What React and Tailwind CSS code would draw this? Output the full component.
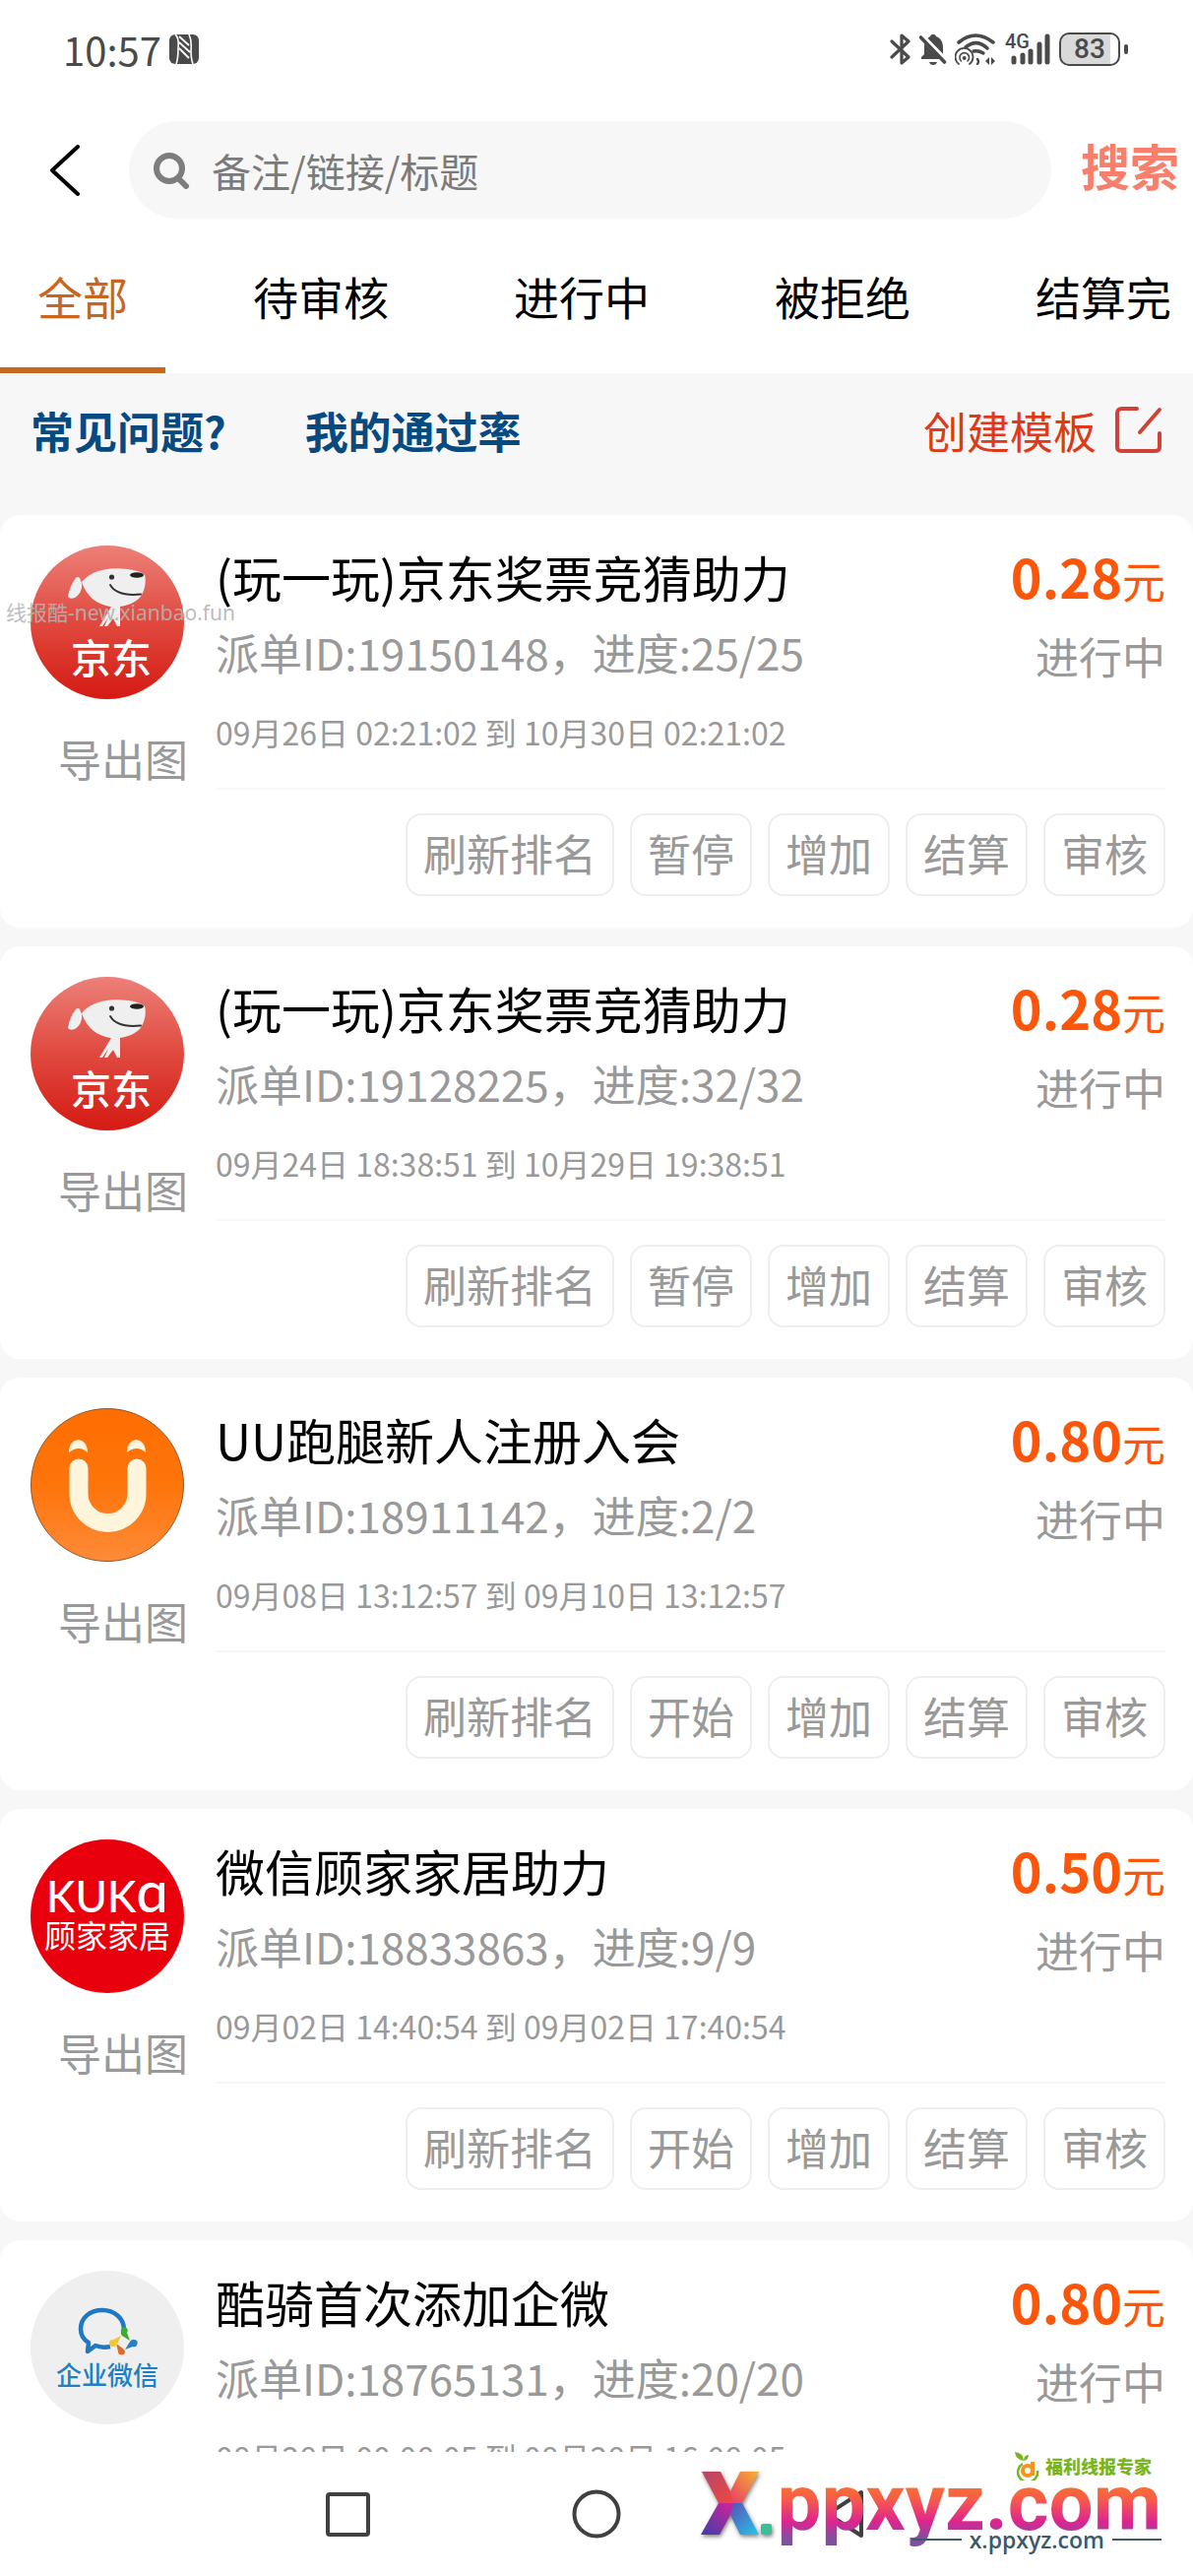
import React, { useState } from 'react';

const tabs = ['全部', '待审核', '进行中', '被拒绝', '结算完'];

const orders = [
  {
    id: '19150148',
    logo: 'jd',
    title: '(玩一玩)京东奖票竞猜助力',
    progress: '25/25',
    period: '09月26日 02:21:02 到 10月30日 02:21:02',
    price: '0.28',
    toggle: '暂停',
  },
  {
    id: '19128225',
    logo: 'jd',
    title: '(玩一玩)京东奖票竞猜助力',
    progress: '32/32',
    period: '09月24日 18:38:51 到 10月29日 19:38:51',
    price: '0.28',
    toggle: '暂停',
  },
  {
    id: '18911142',
    logo: 'uu',
    title: 'UU跑腿新人注册入会',
    progress: '2/2',
    period: '09月08日 13:12:57 到 09月10日 13:12:57',
    price: '0.80',
    toggle: '开始',
  },
  {
    id: '18833863',
    logo: 'kuka',
    title: '微信顾家家居助力',
    progress: '9/9',
    period: '09月02日 14:40:54 到 09月02日 17:40:54',
    price: '0.50',
    toggle: '开始',
  },
  {
    id: '18765131',
    logo: 'wecom',
    title: '酷骑首次添加企微',
    progress: '20/20',
    period: '08月28日 00:08:05 到 08月28日 16:08:05',
    price: '0.80',
    toggle: '开始',
  },
];

const JdLogo = () => (
  <svg viewBox="0 0 156 156" className="w-full h-full">
    <defs>
      <linearGradient id="jd" x1="0" y1="0" x2="0" y2="1">
        <stop offset="0" stopColor="#ec8078" />
        <stop offset="0.5" stopColor="#e0493f" />
        <stop offset="1" stopColor="#d41a12" />
      </linearGradient>
    </defs>
    <circle cx="78" cy="78" r="78" fill="url(#jd)" />
    <path d="M52 37C60 27 76 22 92 23.500C103 24 112 26 116 30C118 36 116 48 110 54C103 60 93 63 81 62C68 60 57 52 52 37Z" fill="#efefef" />
    <path d="M52 38L50 33Q48 31 46 33C42 38 39 45 38 52Q40 55 45 53C50 50 53 44 52 38Z" fill="#efefef" />
    <path d="M82 62L91 62L91 82L88 82L84 74L78 82L75 82L79 73L73 82L70 82Z" fill="#efefef" />
    <circle cx="82.500" cy="32" r="2.600" fill="#333" />
    <ellipse cx="108" cy="30" rx="7" ry="2.800" fill="#222" />
    <path d="M81 40Q88 52 112 49.500" fill="none" stroke="#333" strokeWidth="2" strokeLinecap="round" />
    <text x="82" y="130" textAnchor="middle" fontSize="41" fontWeight="500" fill="#fff">京东</text>
  </svg>
);

const UuLogo = () => (
  <svg viewBox="0 0 156 156" className="w-full h-full">
    <defs>
      <linearGradient id="uu" x1="0" y1="0" x2="0" y2="1">
        <stop offset="0" stopColor="#ff6d00" />
        <stop offset="0.500" stopColor="#fd750b" />
        <stop offset="1" stopColor="#ff8a38" />
      </linearGradient>
    </defs>
    <circle cx="78" cy="78" r="77.500" fill="url(#uu)" stroke="#8a5a32" strokeWidth="1" />
    <path d="M49 61V87A29.500 29.500 0 0 0 108 87V61" fill="none" stroke="#fff4dc" strokeWidth="19" strokeLinecap="round" />
    <path d="M39 45C39 28 58 28 58 45Q49 37 39 45Z" fill="#fff4dc" />
    <path d="M98 45C98 28 117 28 117 45Q108 37 98 45Z" fill="#fff4dc" />
  </svg>
);

const KukaLogo = () => (
  <svg viewBox="0 0 156 156" className="w-full h-full">
    <circle cx="78" cy="78" r="78" fill="#e8000d" />
    <text x="78" y="74" textAnchor="middle" fontSize="44" fontWeight="500" fill="#fff" fontFamily="Lato, sans-serif">
      KUK<tspan fontSize="58">ɑ</tspan>
    </text>
    <text x="78" y="110" textAnchor="middle" fontSize="32" fill="#fff">顾家家居</text>
  </svg>
);

const WecomLogo = () => (
  <svg viewBox="0 0 156 156" className="w-full h-full">
    <circle cx="78" cy="78" r="78" fill="#efefef" />
    <path d="M95 60C95 48 85 40 73 40C60 40 51 48 51 59C51 65 54 70 59 73L58 82L66 76C71 78 76 78 81 77" fill="none" stroke="#1f78c1" strokeWidth="4.500" strokeLinejoin="round" />
    <path d="M92 62A3.500 3.500 0 1 1 98 63L101 71L93 66Q91 64 92 62Z" fill="#3aae2f" />
    <path d="M106 70A3.500 3.500 0 1 1 104 77L96 80L101 72Q103 69 106 70Z" fill="#2a80c4" />
    <path d="M96 82A3.500 3.500 0 1 1 89 82L87 74L94 79Q96 81 96 82Z" fill="#dd6b2f" />
    <path d="M83 77A3.500 3.500 0 1 1 84 70L92 66L88 75Q85 78 83 77Z" fill="#f3c63a" />
    <text x="78" y="116" textAnchor="middle" fontSize="26" fontWeight="500" fill="#1f7fc0">企业微信</text>
  </svg>
);

const logos = { jd: JdLogo, uu: UuLogo, kuka: KukaLogo, wecom: WecomLogo };

const StatusBar = () => (
  <div className="flex items-center justify-between h-[99px] pl-16 pr-[66px] text-[#4a4a4a]">
    <div className="flex items-center gap-2">
      <span className="text-[40px] leading-[48px]">10:57</span>
      {/* NFC */}
      <svg viewBox="0 0 30 30" className="w-[30px] h-[30px]">
        <rect width="30" height="30" rx="6" fill="#4a4a4a" />
        <path d="M6 0Q10 3 9 14Q9 25 7 30M20 0Q23 6 22 16Q22 25 24 30" fill="none" stroke="#fff" strokeWidth="1.600" />
        <path d="M10 8L21 18M10 14L20 24M10 2L20 11" fill="none" stroke="#fff" strokeWidth="1.800" />
      </svg>
    </div>
    <div className="flex items-center gap-2">
      {/* Bluetooth */}
      <svg viewBox="0 0 22 32" className="w-[22px] h-8" fill="none" stroke="#4a4a4a" strokeWidth="3.200" strokeLinecap="round" strokeLinejoin="round">
        <path d="M2 8L19 24L12 30V2L19 8L2 24" />
      </svg>
      {/* Muted bell */}
      <svg viewBox="0 0 28 32" className="w-7 h-8">
        <path d="M2 26V24L5 21V13C5 7 9 4 11 3C12 0 16 0 17 3C22 5 24 9 24 14V21L27 26Z" fill="#4a4a4a" />
        <path d="M10 29H18Q17 32 14 32T10 29Z" fill="#4a4a4a" />
        <path d="M1 1.500L28 29" stroke="#fff" strokeWidth="6" />
        <path d="M1.500 4L25.500 29" stroke="#4a4a4a" strokeWidth="3.600" strokeLinecap="round" />
      </svg>
      {/* Wi-Fi with hotspot */}
      <svg viewBox="0 0 42 32" className="w-[42px] h-8" fill="none" stroke="#4a4a4a" strokeLinecap="round">
        <path d="M4 9Q21 -5 39 9" strokeWidth="3.600" />
        <path d="M11 14Q22 5 33 15" strokeWidth="3.600" />
        <path d="M19 18Q24 17 29 20" strokeWidth="3.400" />
        <path d="M4 31A9 9 0 1 1 15 31" strokeWidth="1.800" />
        <path d="M6.500 28A4.800 4.800 0 1 1 13 28" strokeWidth="1.600" />
        <circle cx="9.700" cy="25" r="2" fill="#4a4a4a" stroke="none" />
        <path d="M23 26Q25 29 23 31" strokeWidth="2.400" />
        <path d="M31 28L35 24V32ZM37 24L41 28L37 32Z" fill="#4a4a4a" stroke="none" />
      </svg>
      {/* Mobile signal */}
      <svg viewBox="0 0 48 32" className="w-12 h-8 overflow-visible">
        <text x="1" y="15" fontSize="20" fontWeight="500" fontFamily="Roboto, sans-serif" fill="#4a4a4a">4G</text>
        <g stroke="#4a4a4a" strokeWidth="5" strokeLinecap="round">
          <path d="M10 25V29M19 22V29M27 18V29M36 11V29M44 3V29" />
        </g>
      </svg>
      {/* Battery */}
      <div className="flex items-center gap-1">
        <div className="flex items-center justify-center w-[62px] h-[34px] rounded-[10px] border-2 border-[#4a4a4a] bg-[linear-gradient(90deg,#d9d9d9_86%,#fff_86%)] font-[Roboto] text-[28px] font-medium leading-[30px]">
          83
        </div>
        <div className="w-1 h-[10px] rounded-full bg-[#4a4a4a]" />
      </div>
    </div>
  </div>
);

const SearchBar = () => (
  <form className="flex mt-6" onSubmit={(e) => e.preventDefault()}>
    <button type="button" aria-label="返回" className="w-[131px] pl-[50px]">
      <svg viewBox="0 0 32 52" className="w-8 h-[52px]" fill="none" stroke="#000" strokeWidth="4" strokeLinecap="round" strokeLinejoin="round">
        <path d="M29 2L3 26L29 50" />
      </svg>
    </button>
    <label className="flex flex-1 min-w-0 items-center gap-[22px] h-[99px] pl-6 rounded-full bg-[#f7f7f7]">
      <svg viewBox="0 0 38 38" className="w-[38px] h-[38px] shrink-0" fill="none" stroke="#7d7d7d" strokeLinecap="round">
        <circle cx="17" cy="17" r="13" strokeWidth="6" />
        <path d="M27 28L34 35" strokeWidth="6" />
      </svg>
      <input
        type="text"
        aria-label="搜索"
        placeholder="备注/链接/标题"
        className="flex-1 min-w-0 bg-transparent outline-none text-[40px] leading-[60px] placeholder:text-[#7b7b7b]"
      />
    </label>
    <button type="submit" className="self-start pl-[30px] pr-[14px] text-[50px] leading-[88px] font-bold text-[#f97f6d]">
      搜索
    </button>
  </form>
);

const OrderCard = ({ order }) => {
  const Logo = logos[order.logo];

  return (
    <article className="flex shrink-0 gap-7 pt-[31px] pb-8 pl-[31px] pr-7 rounded-[20px] bg-white">
      <div className="shrink-0 w-[160px] text-right">
        <div className="w-[156px] h-[156px]">
          <Logo />
        </div>
        <button className="mt-[26px] text-[44px] leading-[68px] text-[#999]">导出图</button>
      </div>

      <div className="flex-1 min-w-0">
        <div className="flex justify-between pb-[34px] border-b-2 border-[#f6f6f6]">
          <div>
            <h2 className="text-[50px] leading-[62px] text-black">{order.title}</h2>
            <p className="mt-[10px] text-[44px] leading-[72px] text-[#999]">
              派单ID:{order.id}，进度:{order.progress}
            </p>
            <p className="mt-[22px] text-[32px] leading-[46px] text-[#999]">{order.period}</p>
          </div>
          <div className="text-right">
            <p className="text-[54px] leading-[62px] font-bold text-[#fb560a]">
              {order.price}
              <span className="text-[44px] leading-none font-normal">元</span>
            </p>
            <p className="mt-[14px] text-[44px] leading-[72px] text-[#999]">进行中</p>
          </div>
        </div>

        {/* Actions */}
        <div className="flex justify-end gap-4 pt-6">
          {['刷新排名', order.toggle, '增加', '结算', '审核'].map((label) => (
            <button key={label} className="h-[84px] pb-1 px-4 border-2 border-[#eee] rounded-[16px] text-[44px] leading-[72px] text-[#999]">
              {label}
            </button>
          ))}
        </div>
      </div>
    </article>
  );
};

// Promo stamp over the bottom right corner
const SiteStamp = () => (
  <div className="absolute right-[32px] bottom-[18px] w-[470px] h-[109px] pointer-events-none">
    <svg viewBox="0 0 80 80" className="absolute left-0 top-[15px] w-20 h-20 overflow-visible drop-shadow-[1px_2px_2px_rgba(0,0,0,0.5)]">
      <defs>
        <linearGradient id="xa" x1="0" y1="0" x2="1" y2="1">
          <stop offset="0" stopColor="#b5476a" />
          <stop offset="1" stopColor="#f0473f" />
        </linearGradient>
        <linearGradient id="xb" x1="1" y1="0" x2="0" y2="1">
          <stop offset="0" stopColor="#f5b52e" />
          <stop offset="1" stopColor="#e8396a" />
        </linearGradient>
        <linearGradient id="xc" x1="1" y1="0" x2="0" y2="1">
          <stop offset="0" stopColor="#d9209b" />
          <stop offset="1" stopColor="#3b3fa8" />
        </linearGradient>
        <linearGradient id="xd" x1="0" y1="0" x2="1" y2="1">
          <stop offset="0" stopColor="#5b4fb0" />
          <stop offset="1" stopColor="#21c8ee" />
        </linearGradient>
      </defs>
      <path d="M3 6H22L32 26L36 38H20Z" fill="url(#xa)" />
      <path d="M42 6H61L44 38H35L32 26Z" fill="url(#xb)" />
      <path d="M20 38H36L32 50L21 70H2Z" fill="url(#xc)" />
      <path d="M35 38H44L61 70H42L32 50Z" fill="url(#xd)" />
      <rect x="63" y="59" width="11" height="11" rx="2" fill="#3bbf97" />
    </svg>
    <span className="absolute right-0 top-0 bg-[linear-gradient(180deg,#f9762b_30%,#f75c48_46%,#dd2491_68%,#7d51a0_84%)] bg-clip-text text-transparent font-[Roboto] text-[80px] leading-[106px] font-bold">
      ppxyz.com
    </span>
    <div className="absolute right-0 top-[75px] flex items-center gap-2 text-[#3f5a66]">
      <span className="w-[50px] h-[2px] bg-[#3f5a66]" />
      <span className="font-['Open_Sans'] text-[23px] leading-[30px] font-semibold">x.ppxyz.com</span>
      <span className="w-[50px] h-[2px] bg-[#3f5a66]" />
    </div>
    <div className="absolute right-[10px] top-0 flex items-center gap-1 text-[#79b51c]">
      <svg viewBox="0 0 28 30" className="w-7 h-[30px]">
        <path d="M9 13A10 10 0 1 0 24 20" fill="none" stroke="#79b51c" strokeWidth="2.500" />
        <circle cx="14" cy="20" r="5" fill="none" stroke="#f7941d" strokeWidth="4" />
        <path d="M19 11V25" stroke="#f7941d" strokeWidth="4" />
        <path d="M1 1Q10 2 10 10Q2 9 1 1ZM10 10Q10 4 15 4Q15 9 10 10Z" fill="#79b51c" />
      </svg>
      <span className="text-[18px] leading-[22px] font-black">福利线报专家</span>
    </div>
  </div>
);

const SystemNav = () => (
  <nav className="relative flex shrink-0 items-start justify-center h-[126px] pt-[38px] bg-white">
    <button aria-label="最近任务" className="flex justify-center w-63">
      <svg viewBox="0 0 50 50" className="w-[50px] h-[50px]" fill="none" stroke="#404040" strokeWidth="4">
        <rect x="4" y="5" width="41" height="41" rx="2" />
      </svg>
    </button>
    <button aria-label="主页" className="flex justify-center w-63">
      <svg viewBox="0 0 50 50" className="w-[50px] h-[50px]" fill="none" stroke="#404040" strokeWidth="4">
        <circle cx="25" cy="25" r="22.500" />
      </svg>
    </button>
    <button aria-label="后退" className="flex justify-center w-63">
      <svg viewBox="0 0 50 50" className="w-[50px] h-[50px]" fill="none" stroke="#404040" strokeWidth="4" strokeLinejoin="round">
        <path d="M42 3V47L8 25Z" />
      </svg>
    </button>
    <SiteStamp />
  </nav>
);

const App = () => {
  const [activeTab, setActiveTab] = useState('全部');

  return (
    <div className="relative flex flex-col h-screen overflow-hidden bg-white font-['Noto_Sans_CJK_SC',sans-serif]">
      <header className="shrink-0">
        <StatusBar />
        <SearchBar />

        {/* Tabs */}
        <div className="flex gap-[51px] overflow-hidden">
          {tabs.map((tab) => (
            <button
              key={tab}
              onClick={() => setActiveTab(tab)}
              className={`shrink-0 px-[38px] pt-11 pb-[39px] border-b-[6px] text-[46px] leading-[68px] ${
                activeTab === tab ? 'border-[#c8651f] text-[#c8651f]' : 'border-transparent text-black'
              }`}
            >
              {tab}
            </button>
          ))}
        </div>
      </header>

      <main className="flex flex-col flex-1 min-h-0 overflow-hidden bg-[#f7f7f7]">
        <div className="flex shrink-0 items-center justify-between pt-[22px] pb-[50px] pl-[31px] pr-[30px] text-[44px] leading-[72px]">
          <div className="flex gap-20 font-bold text-[#064a82]">
            <a href="#faq">常见问题?</a>
            <a href="#rate">我的通过率</a>
          </div>
          <a href="#template" className="flex items-center gap-[18px] text-[#dc3a1a]">
            创建模板
            <svg viewBox="0 0 50 50" className="w-[50px] h-[50px]" fill="none" stroke="#cf4238" strokeWidth="4" strokeLinecap="round" strokeLinejoin="round">
              <path d="M23 3H8Q3 3 3 8V42Q3 46 8 46H41Q46 46 46 42V28M46 4L26 27" />
            </svg>
          </a>
        </div>

        <div className="flex flex-col gap-[19px]">
          {orders.map((order) => (
            <OrderCard key={order.id} order={order} />
          ))}
        </div>
      </main>

      <SystemNav />

      <span className="absolute left-[6px] top-[608px] font-['Noto_Sans','Noto_Sans_CJK_SC',sans-serif] text-[21px] leading-[28px] text-[#b4b4b4]/90 pointer-events-none">
        线报酷-new.xianbao.fun
      </span>
    </div>
  );
};

export default App;
